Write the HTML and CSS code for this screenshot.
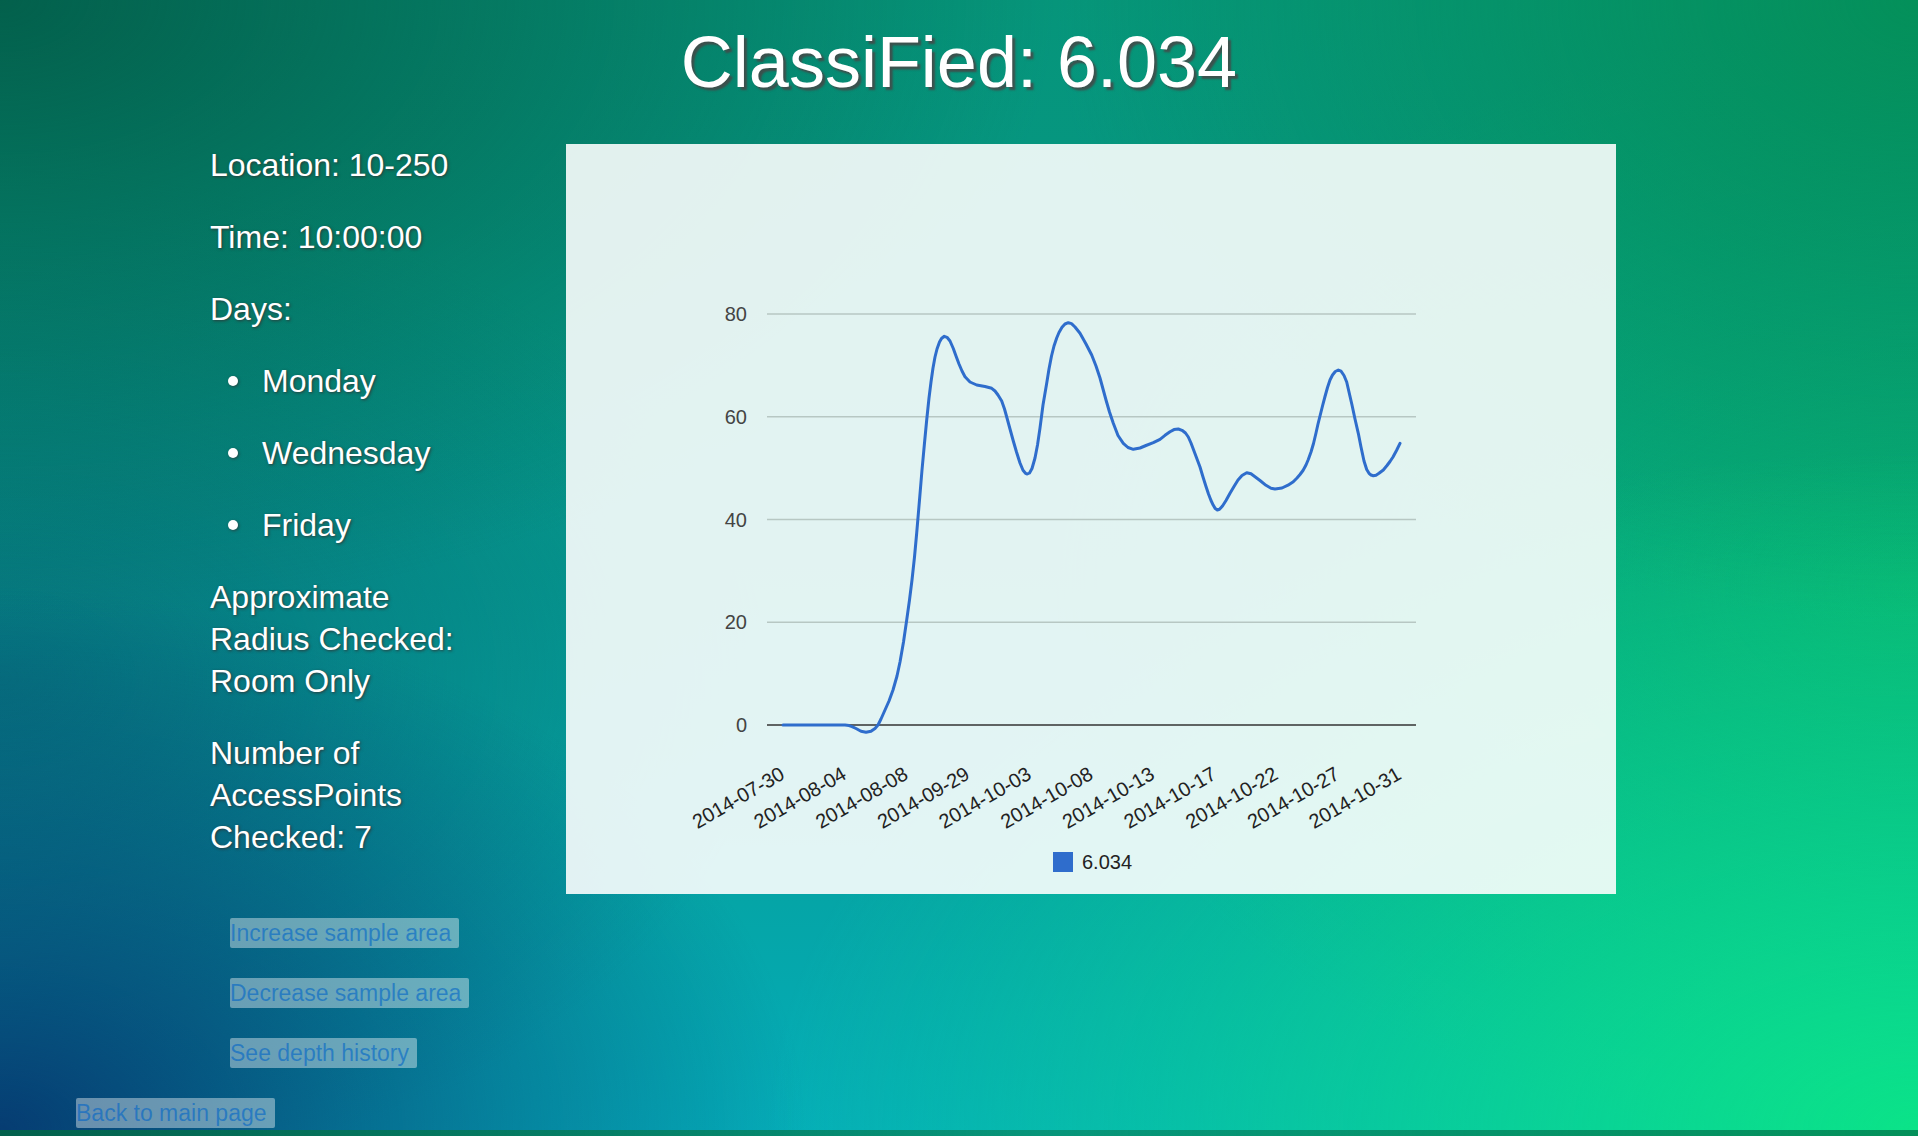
FILE: index.html
```html
<!DOCTYPE html>
<html lang="en">
<head>
<meta charset="utf-8">
<title>ClassiFied: 6.034</title>
<link rel="stylesheet" href="styles.css">
</head>
<body>
<h1 class="title">ClassiFied: 6.034</h1>
<div class="main">
  <div class="info">
    <p>Location: 10-250</p>
    <p>Time: 10:00:00</p>
    <p>Days:</p>
    <ul class="days">
      <li>Monday</li>
      <li>Wednesday</li>
      <li>Friday</li>
    </ul>
    <p>Approximate Radius Checked: Room Only</p>
    <p>Number of AccessPoints Checked: 7</p>
  </div>
  <div class="chart">
    <svg class="chart-svg" width="1050" height="750" viewBox="566 144 1050 750" xmlns="http://www.w3.org/2000/svg">
      <g class="grid">
        <line x1="767" y1="314" x2="1416" y2="314"/>
        <line x1="767" y1="416.7" x2="1416" y2="416.7"/>
        <line x1="767" y1="519.5" x2="1416" y2="519.5"/>
        <line x1="767" y1="622.2" x2="1416" y2="622.2"/>
      </g>
      <line class="axis" x1="767" y1="725" x2="1416" y2="725"/>
      <g class="ylabels">
        <text x="747" y="321">80</text>
        <text x="747" y="424">60</text>
        <text x="747" y="527">40</text>
        <text x="747" y="629">20</text>
        <text x="747" y="732">0</text>
      </g>
      <polyline class="series" points="783,725 845,725 849,725.6 852,726.6 856,728.5 861,731.3 866,732.3 871,731.3 875,728.5 878,725 881,719 885,710 889,701 893,690 897,676 900,662 903.5,642 906.7,620 909.5,600 912,580 914.5,557 916.7,533 919.5,500 922,470 924.5,443 926.7,420 929,398 931,382 933,368 935,357 937,349 939.5,342 941.5,338.5 944.3,336.3 947,337.3 950,341 953.3,348.5 956,356 959,364 962,371 965,376.7 970,382 976.7,385 985,386.5 991.7,388.3 995,391 998,395 1001.7,401 1004.5,409 1007,418 1010,429 1013.3,441 1016.5,452 1020,463 1023,470.3 1025.5,473.3 1027.3,474 1029.5,473 1032,468.5 1035,458 1037.5,445 1040,428 1043,405 1046.7,383.3 1049,369 1051.5,356 1054,346 1056.7,338 1059,332.5 1062,327.3 1065,324 1068.3,322.7 1071.5,323.6 1075,327 1080,333.3 1086,344 1091.7,355 1096,366 1100,378 1103,389 1106,400 1109.5,412 1113.3,423.3 1118,435.5 1123.3,443.3 1128,447.5 1133.3,449.3 1140,448 1146,445.5 1153.3,442.7 1160,439.3 1165,435.3 1170,431.8 1174,429.6 1178.3,429 1182,430.3 1185.5,433 1188.3,437 1191,443 1194,451 1197,459 1200,467 1203,477 1206,486.5 1208.5,494 1211,500.5 1213.3,505.3 1215.3,508.6 1217.3,510 1219.5,509.3 1222.5,506 1226,500.5 1230,493.3 1234,486.5 1238,480 1242,475.5 1246.7,472.7 1251,473.8 1256,477.5 1260,480.5 1266,485.3 1271,488.2 1275,489 1282,488 1288,485.2 1293.3,481.7 1297,478 1300,474.5 1303,470.5 1306,465 1308.3,459.5 1311,452 1313.5,443.5 1316,433 1318,424 1320,416 1322.5,406 1325,396.5 1327.5,387.5 1330,380 1332.5,375 1335.3,371.5 1338.3,370 1341,371.2 1344,375.5 1346.7,382 1349,392 1352,405 1355,419 1358.3,433.3 1361,447 1364,461 1366.7,469.5 1369,473.3 1371,475 1373.3,475.7 1376,475.2 1379,473.3 1383.3,470 1387,465.5 1390,461.5 1393,457 1396.5,450.5 1400,443.3"/>
      <g class="xlabels">
        <text transform="translate(786 778) rotate(-30)">2014-07-30</text>
        <text transform="translate(847.7 778) rotate(-30)">2014-08-04</text>
        <text transform="translate(909.3 778) rotate(-30)">2014-08-08</text>
        <text transform="translate(971 778) rotate(-30)">2014-09-29</text>
        <text transform="translate(1032.7 778) rotate(-30)">2014-10-03</text>
        <text transform="translate(1094.3 778) rotate(-30)">2014-10-08</text>
        <text transform="translate(1156 778) rotate(-30)">2014-10-13</text>
        <text transform="translate(1217.7 778) rotate(-30)">2014-10-17</text>
        <text transform="translate(1279.3 778) rotate(-30)">2014-10-22</text>
        <text transform="translate(1341 778) rotate(-30)">2014-10-27</text>
        <text transform="translate(1402.7 778) rotate(-30)">2014-10-31</text>
      </g>
      <rect class="legend-key" x="1053" y="852" width="20" height="20"/>
      <text class="legend-text" x="1082" y="869">6.034</text>
    </svg>
  </div>
</div>
<div class="tools">
  <button class="btn" type="button">Increase sample area</button>
  <button class="btn" type="button">Decrease sample area</button>
  <button class="btn" type="button">See depth history</button>
</div>
<div class="back">
  <button class="btn" type="button">Back to main page</button>
</div>
</body>
</html>
```

FILE: styles.css
```css
html {
  background-color: #06977f;
  background-image:
    radial-gradient(ellipse 42% 48% at 0% 100%, #063c72, rgba(6, 60, 114, 0)),
    radial-gradient(ellipse 55% 55% at 0% 0%, #03604c, rgba(3, 96, 76, 0)),
    radial-gradient(ellipse 40% 45% at 0% 60%, rgba(6, 108, 122, 0.85), rgba(6, 108, 122, 0)),
    radial-gradient(ellipse 60% 60% at 100% 100%, #0be388, rgba(11, 227, 136, 0)),
    radial-gradient(ellipse 45% 55% at 100% 0%, #04905a, rgba(4, 144, 90, 0)),
    radial-gradient(ellipse 45% 50% at 100% 52%, rgba(8, 180, 112, 0.9), rgba(8, 180, 112, 0)),
    linear-gradient(to bottom, #06957a 0%, #05998e 50%, #05adb8 100%);
  background-size: 100% 1130px;
  background-repeat: repeat-y;
}

body {
  margin: 0;
  padding: 22px 0 0;
  min-height: 1108px;
  font-family: "Liberation Sans", Arial, sans-serif;
  color: #fff;
}

.title {
  margin: 0 0 42px;
  font-size: 72px;
  line-height: 80px;
  font-weight: normal;
  text-align: center;
  text-shadow: 3px 3px 2px rgba(70, 70, 70, 0.85);
}

.main {
  display: flex;
  align-items: flex-start;
  gap: 96px;
  padding-left: 210px;
}

.info {
  width: 260px;
  flex: none;
  font-size: 32px;
  line-height: 42px;
  text-shadow: 1px 1px 3px rgba(50, 50, 50, 0.9);
}

.info p {
  margin: 0 0 30px;
}

.days {
  margin: 0 0 30px;
  padding-left: 52px;
  list-style: none;
}

.days li {
  position: relative;
  margin-bottom: 30px;
}

.days li::before {
  content: "";
  position: absolute;
  left: -34px;
  top: 16px;
  width: 10px;
  height: 10px;
  border-radius: 50%;
  background: #fff;
  box-shadow: 1px 1px 3px rgba(50, 50, 50, 0.7);
}

.chart {
  flex: none;
  width: 1050px;
  height: 750px;
  background: rgba(255, 255, 255, 0.885);
}

.chart-svg {
  display: block;
  font-family: "Liberation Sans", Arial, sans-serif;
}

.grid line {
  stroke: #b7c7c3;
  stroke-width: 1.5;
}

.axis {
  stroke: #333;
  stroke-width: 1.5;
}

.ylabels text {
  font-size: 20px;
  fill: #444;
  text-anchor: end;
}

.xlabels text {
  font-size: 20px;
  fill: #222;
  text-anchor: end;
}

.series {
  fill: none;
  stroke: #2f6dcc;
  stroke-width: 3;
  stroke-linejoin: round;
  stroke-linecap: round;
}

.legend-key {
  fill: #2f6dcc;
}

.legend-text {
  font-size: 20px;
  fill: #222;
}

.tools {
  display: flex;
  flex-direction: column;
  align-items: flex-start;
  gap: 30px;
  margin-top: 24px;
  padding-left: 230px;
}

.back {
  margin-top: 30px;
  padding-left: 76px;
}

.btn {
  display: block;
  height: 30px;
  margin: 0;
  padding: 0 8px 0 0;
  border: 0;
  border-radius: 2px;
  background: rgba(255, 255, 255, 0.4);
  color: rgba(0, 100, 200, 0.6);
  font-family: "Liberation Sans", Arial, sans-serif;
  font-size: 23px;
  line-height: 30px;
  cursor: pointer;
}
```
